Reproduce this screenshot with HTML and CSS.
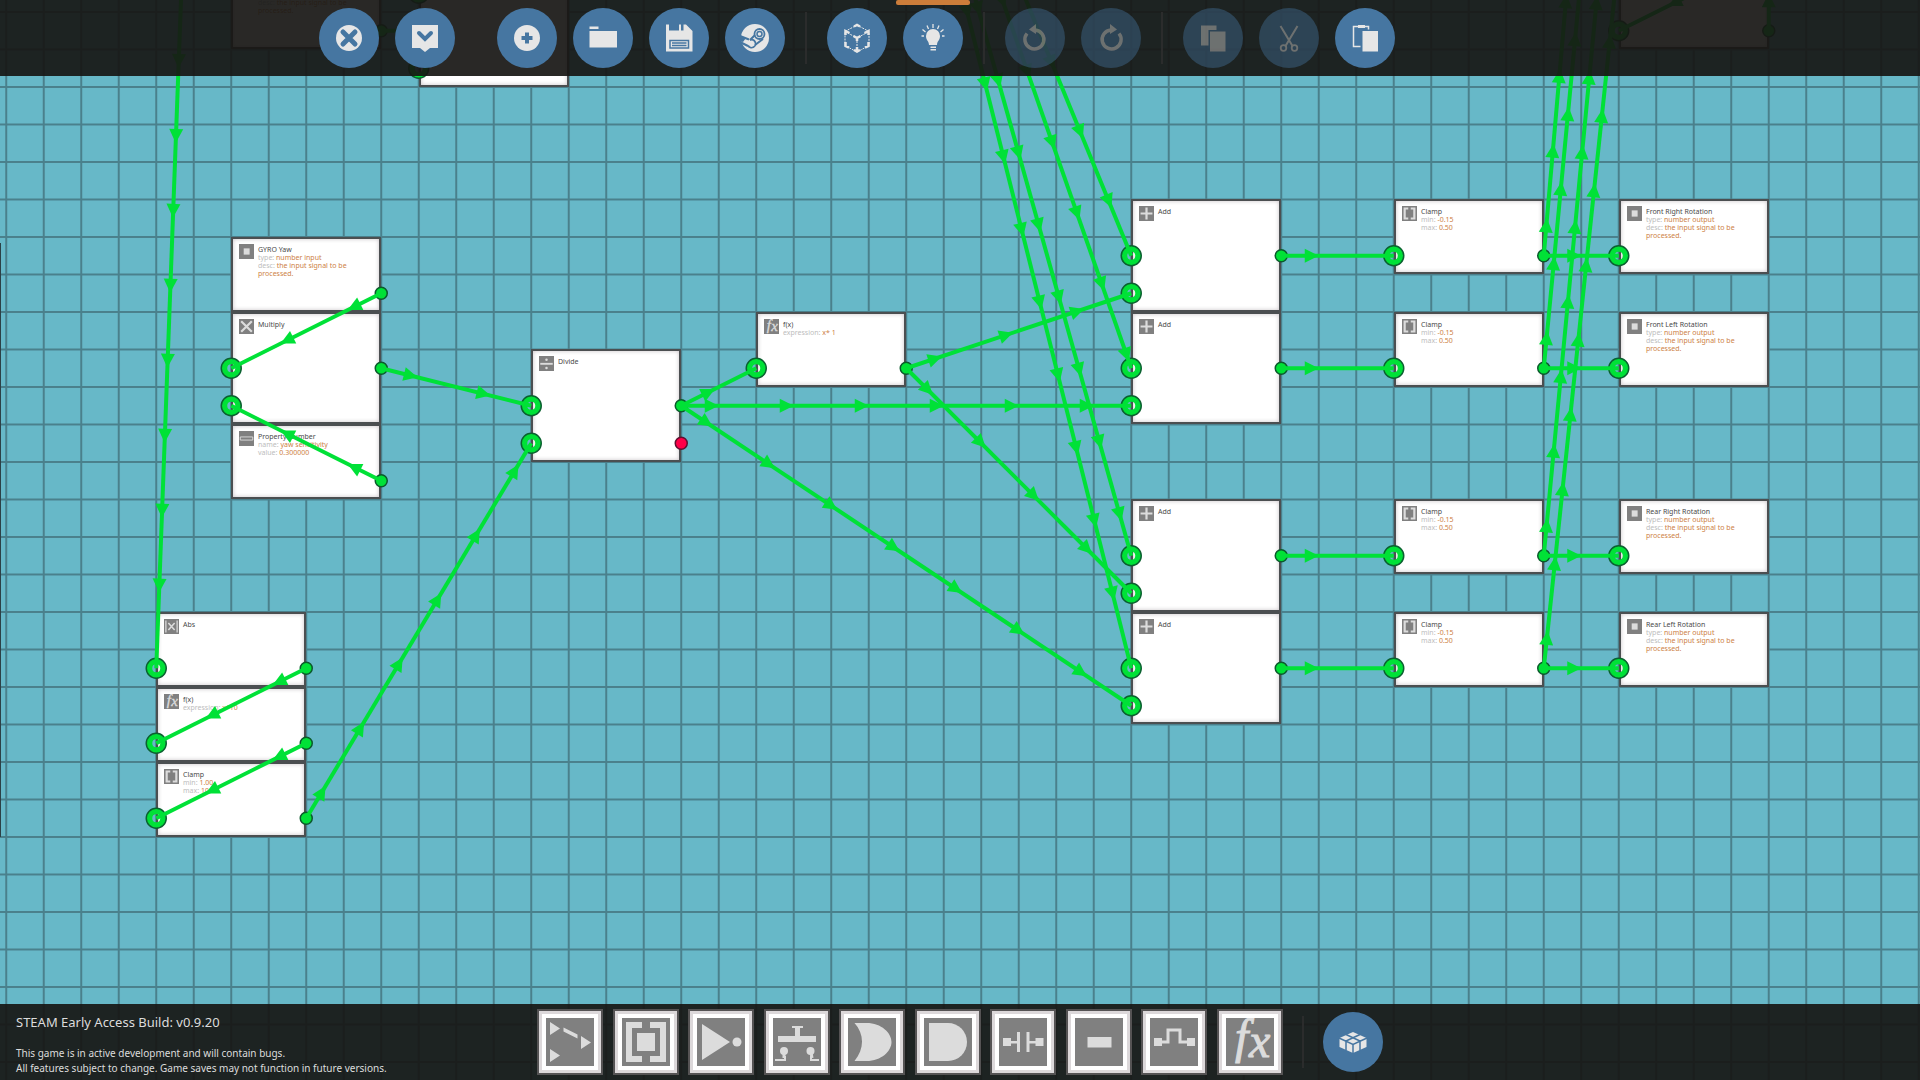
FILE: index.html
```html
<!DOCTYPE html>
<html lang="en">
<head>
<meta charset="utf-8">
<title>Logic Editor</title>
<link rel="stylesheet" href="styles.css">
</head>
<body>
<svg class="defs" aria-hidden="true">
  <symbol id="g-switch" viewBox="0 0 48 48"><path d="M4 4l10 6.500-10 6.500zM4 31l10 6.500-10 6.500zM35 18l10 6.500-10 6.500zM17.500 9.500l14 7v4l-14-7z"/></symbol>
  <symbol id="g-clamp" viewBox="0 0 48 48"><path d="M4 4h16v6h-10v28h10v6h-16zM44 4h-16v6h10v28h-10v6h16zM15 15h18v18h-18z"/></symbol>
  <symbol id="g-bracket" viewBox="0 0 48 48"><path d="M5 5h15v6h-8v26h8v6h-15zM43 5h-15v6h8v26h-8v6h15z"/></symbol>
  <symbol id="g-not" viewBox="0 0 48 48"><path d="M5 6l28 18-28 18z"/><circle cx="40" cy="24" r="4.500"/></symbol>
  <symbol id="g-push" viewBox="0 0 48 48"><path d="M5 18h38v6h-38zM19 8h11v2h-3v8h-5v-8h-3z"/><circle cx="11" cy="33" r="4"/><circle cx="37.500" cy="33" r="4"/><path class="line" stroke-width="3" d="M11 34v6M38 34l1 6"/><path class="line" stroke-width="2" d="M12 38v4h-10M38 38v4h8"/></symbol>
  <symbol id="g-or" viewBox="0 0 48 48"><path d="M6.500 5h12c15 0 25 10 25 19s-10 19-25 19h-12c10-12 10-27 0-38z"/></symbol>
  <symbol id="g-and" viewBox="0 0 48 48"><path d="M5 5h19a19 19 0 0 1 0 38h-19z"/></symbol>
  <symbol id="g-cap" viewBox="0 0 48 48"><path d="M4 20h8v8h-8zM36.500 20h8v8h-8zM18 14h3v20h-3zM27.500 14h3v20h-3zM12 23h6v2.500h-6zM30 23h7v2.500h-7z"/></symbol>
  <symbol id="g-const" viewBox="0 0 48 48"><path d="M12.500 19h24v10.500h-24z"/></symbol>
  <symbol id="g-pulse" viewBox="0 0 48 48"><path d="M4 20h8v8h-8zM37 20h8v8h-8z"/><path class="line" stroke-width="3" d="M12 24h6v-12h12v12h7"/></symbol>
  <symbol id="g-fx" viewBox="0 0 48 48"><text class="fx" y="35"><tspan x="9">f</tspan><tspan x="23" y="39">x</tspan></text></symbol>
  <symbol id="g-io" viewBox="0 0 48 48"><path d="M15 14h19v20h-19z"/></symbol>
  <symbol id="g-mul" viewBox="0 0 48 48"><path class="line" stroke-width="7" d="M7 7l34 34M41 7l-34 34"/></symbol>
  <symbol id="g-add" viewBox="0 0 48 48"><path class="line" stroke-width="7" d="M24 5v38M5 24h38"/></symbol>
  <symbol id="g-div" viewBox="0 0 48 48"><path class="line" stroke-width="6" d="M4 25h40"/><circle cx="24" cy="12" r="4"/><circle cx="24" cy="38" r="4"/></symbol>
  <symbol id="g-prop" viewBox="0 0 48 48"><path class="line" stroke-width="3" d="M4 19h40v10h-40z"/></symbol>
  <symbol id="g-abs" viewBox="0 0 48 48"><path class="line" stroke-width="4" d="M6 5v38M42 5v38"/><path class="line" stroke-width="5" d="M14 13l20 22M34 13l-20 22"/></symbol>
</svg>

<main class="board" id="board" aria-label="Logic board"></main>

<header class="topbar">
  <div class="group">
    <button class="round" aria-label="Close"><svg viewBox="0 0 60 60"><circle cx="30" cy="30" r="13"/><path class="cut" stroke-width="5" stroke-linecap="round" d="M24 24l12 12M36 24l-12 12"/></svg></button>
    <button class="round" aria-label="Confirm"><svg viewBox="0 0 60 60"><path d="M17 17h26v23h-8l-5 4-5-4h-8z"/><path class="cut" stroke-width="4" stroke-linecap="round" d="M24 25l6 6 6-6"/></svg></button>
  </div>
  <div class="group">
    <button class="round" aria-label="New"><svg viewBox="0 0 60 60"><circle cx="30" cy="30" r="13"/><path class="cut" stroke-width="4" d="M30 24.500v11M24.500 30h11"/></svg></button>
    <button class="round" aria-label="Open"><svg viewBox="0 0 60 60"><path d="M16.500 18.500h9v2.500h-9zM16.500 23h27.500v16.500h-27.500z"/></svg></button>
    <button class="round" aria-label="Save"><svg viewBox="0 0 60 60"><path d="M17 16.500h3v6h10v-6h2v6h2.500v-6h2.500l6.500 6.500v20.500h-26.500z"/><path class="cut" stroke-width="1.500" d="M21 32.500h18.500v7.500h-18.500zM23 35h14.500M23 37.500h14.500"/></svg></button>
    <button class="round" aria-label="Steam Workshop"><svg viewBox="0 0 60 60"><circle cx="30" cy="30" r="14"/><path class="cut" stroke-width="2" d="M15 28l9 3.500M30 27l-5 5M38 31l-8 6M15 34l8 4"/><path class="cut-fill" d="M14 27l7 3-3 4-4-1z"/><circle class="cut" stroke-width="1.800" cx="34.500" cy="26" r="5"/><circle class="cut" stroke-width="1.500" cx="34.500" cy="26" r="2.500"/><path class="cut" stroke-width="1.800" d="M23 37.500a4 4 0 1 0 2-5.500"/></svg></button>
  </div>
  <span class="divider"></span>
  <div class="group">
    <button class="round" aria-label="View in 3D"><svg viewBox="0 0 60 60"><path class="line" stroke-width="1" stroke-dasharray="2 1" d="M30 17l12 6.500v14L30 44l-12-6.500v-14zM18 23.500L30 30l12-6.500M30 30v13"/><path class="line" stroke-width="2.500" d="M27 18.500l3-1.500 3 1.500M18.500 27v-4l4 2M41.500 27v-4l-4 2M26.500 28l3.500 2 3.500-2M30 30v3M18.500 34v4l3.500 1.500M41.500 34v4l-3.500 1.500M27 42l3 1.500 3-1.500M30 39v4"/></svg></button>
    <button class="round active" aria-label="Logic view"><svg viewBox="0 0 60 60"><path d="M26 37c0-4-3-4.500-3-9a7 7 0 0 1 14 0c0 4.500-3 5-3 9zM27.500 38.500h5.500v1.500h-5.500zM27.500 41h5.500v1.500h-5.500z"/><path class="line" stroke-width="1.300" d="M30 16v4M24 17.500l1.500 3.500M36 17.500L34.500 21M19.500 21.500l3 2.500M40.500 21.500l-3 2.500M18.500 28h2.500M39 28h2.500"/></svg></button>
  </div>
  <span class="divider"></span>
  <div class="group">
    <button class="round" aria-label="Undo" disabled><svg viewBox="0 0 60 60"><path class="line" stroke-width="3.500" d="M22 25.500a9.500 9.500 0 1 0 8-3.500"/><path d="M31 16v10l-7-4.500z"/></svg></button>
    <button class="round" aria-label="Redo" disabled><svg viewBox="0 0 60 60"><path class="line" stroke-width="3.500" d="M38 25.500a9.500 9.500 0 1 1-8-3.500"/><path d="M29 16v10l7-4.500z"/></svg></button>
  </div>
  <span class="divider"></span>
  <div class="group">
    <button class="round" aria-label="Copy" disabled><svg viewBox="0 0 60 60"><path d="M18 17.500h15.500v4.500h-8v15.500h-7.500zM27 23.500h15.500v20h-15.500z"/></svg></button>
    <button class="round" aria-label="Cut" disabled><svg viewBox="0 0 60 60"><path class="line" stroke-width="2" d="M21.500 18l12 20M38.500 18l-12 20"/><circle class="line" stroke-width="1.800" cx="24.500" cy="40" r="2.800"/><circle class="line" stroke-width="1.800" cx="35.500" cy="40" r="2.800"/></svg></button>
    <button class="round" aria-label="Paste"><svg viewBox="0 0 60 60"><path class="line" stroke-width="1.500" d="M24 18.500h-5.500v20h7M28 18.500h5.500v3"/><path d="M23 17h7v3h-7zM27.500 23h15.500v20.500h-15.500z"/></svg></button>
  </div>
</header>

<footer class="bottombar">
  <div class="build">
    <p class="build-name">STEAM Early Access Build: v0.9.20</p>
    <p class="build-note">This game is in active development and will contain bugs.<br>All features subject to change. Game saves may not function in future versions.</p>
  </div>
  <div class="palette">
    <button class="tile" aria-label="Switch"><svg><use href="#g-switch"/></svg></button>
    <button class="tile" aria-label="Clamp"><svg><use href="#g-clamp"/></svg></button>
    <button class="tile" aria-label="Not"><svg><use href="#g-not"/></svg></button>
    <button class="tile" aria-label="Push to toggle"><svg><use href="#g-push"/></svg></button>
    <button class="tile" aria-label="Or"><svg><use href="#g-or"/></svg></button>
    <button class="tile" aria-label="And"><svg><use href="#g-and"/></svg></button>
    <button class="tile" aria-label="Capacitor"><svg><use href="#g-cap"/></svg></button>
    <button class="tile" aria-label="Constant"><svg><use href="#g-const"/></svg></button>
    <button class="tile" aria-label="Pulse"><svg><use href="#g-pulse"/></svg></button>
    <button class="tile" aria-label="Function"><svg><use href="#g-fx"/></svg></button>
  </div>
  <span class="divider"></span>
  <button class="round" aria-label="Components"><svg viewBox="0 0 60 60"><path d="M30 20l13.500 6v9L30 41l-13.500-6v-9z"/><path class="cut" stroke-width="1.500" d="M16 26l14 6.500L44 26M30 32v10M23 22.500l14 6.500v9.500M37 22.500L23 29v9.500"/></svg></button>
</footer>
<script src="script.js"></script>
</body>
</html>
```

FILE: styles.css
```css
* { box-sizing: border-box; }

body {
  margin: 0;
  min-height: 100vh;
  display: flex;
  flex-direction: column;
  justify-content: space-between;
  position: relative;
  overflow: hidden;
  background: #67b8c8;
  font-family: "Noto Sans", "Open Sans", sans-serif;
}

button {
  margin: 0;
  padding: 0;
  border: 0;
  font: inherit;
}

svg { display: block; fill: currentColor; }
.defs { position: absolute; width: 0; height: 0; }
.line { fill: none; stroke: currentColor; }
.cut { fill: none; stroke: #4676a1; }
.cut-fill { fill: #4676a1; }
.fx {
  font: italic 48px "Liberation Serif", serif;
  stroke: currentColor;
  stroke-width: 1px;
}

/* board */
.board {
  position: absolute;
  inset: 0;
  overflow: hidden;
}
.layer {
  position: absolute;
  inset: 0;
  width: 100%;
  height: 100%;
}
.gridline { fill: none; stroke: #4a808c; stroke-width: 2; }
.frame { fill: none; stroke: #2c4046; stroke-width: 2; }
.wire { stroke: #00e137; stroke-width: 4; }
.arrow { fill: #00e137; }
.socket { fill: none; stroke: #00e137; stroke-width: 6; }
.socket-rim { fill: none; stroke: #0b6130; stroke-width: 1.5; }
.plug { fill: #00e137; stroke: #0b5a2c; stroke-width: 1.5; }
.plug.off { fill: #ff0048; stroke: #5f1030; }

.node {
  position: absolute;
  display: flex;
  align-items: flex-start;
  gap: 4px;
  padding: 5px 6px 0;
  border: 2px solid #4b4f51;
  background: #fff;
  box-shadow: inset 0 0 4px #c8c2c6;
  color: #4a4a4a;
}
.node-icon {
  flex: none;
  width: 15px;
  height: 15px;
  background: #808080;
  color: #dcdcdc;
}
.node-title {
  margin: 0;
  padding-top: 2px;
  font-size: 7px;
  font-weight: 400;
  line-height: 8px;
}
.node-row {
  margin: 0;
  width: 96px;
  font-size: 7px;
  line-height: 8px;
  color: #bdbdbd;
}
.node-row b { font-weight: 400; color: #cd8146; }

/* bars */
.topbar, .bottombar {
  position: relative;
  height: 76px;
  background: rgba(23, 22, 20, .92);
}
.topbar {
  display: flex;
  align-items: center;
  justify-content: center;
  padding-right: 206px;
}
.group { display: flex; gap: 16px; }
.group + .group { margin-left: 42px; }
.divider {
  width: 2px;
  height: 52px;
  margin: 0 20px;
  background: #2b2c2c;
}
.round {
  position: relative;
  width: 60px;
  height: 60px;
  border-radius: 50%;
  background: #4676a1;
  color: #e6e6e6;
}
.round:disabled { opacity: .4; }
.round.active::before {
  content: "";
  position: absolute;
  top: -8px;
  left: -7px;
  right: -7px;
  height: 5px;
  border-radius: 2px;
  background: #cc7d3a;
}

.bottombar {
  display: grid;
  grid-template-columns: 1fr auto auto auto 1fr;
  align-items: center;
}
.bottombar .divider { margin: 0 19px; }
.build {
  justify-self: start;
  width: 0;
  padding: 3px 0 0 16px;
  white-space: nowrap;
  color: #dcdcdc;
}
.build p { margin: 0; }
.build-name { font-size: 13px; line-height: 22px; }
.bottombar .build-note { margin-top: 13px; font-size: 10px; line-height: 15px; }
.palette {
  display: flex;
  justify-content: space-between;
  width: 746px;
}
.tile {
  width: 66px;
  height: 66px;
  padding: 4px;
  border: 2px solid #555354;
  background: #fff;
  box-shadow: inset 0 0 0 3px #dcd8da;
  color: #dcdcdc;
}
.tile svg {
  width: 48px;
  height: 48px;
  margin: auto;
  background: #808080;
}
```

FILE: script.js
```js
// Board geometry: everything is placed in grid cells.
const CELL = 37.5, OX = 6.25, OY = 12;
const px = c => OX + c * CELL;
const py = r => OY + r * CELL;

const io = (kind) => [["type", "number " + kind], ["desc", "the input signal to be processed."]];
const lim = (min, max) => [["min", min], ["max", max]];

// col, row, height, icon, title, rows, input rows, output rows
const nodes = [
  [6, -1, 2, "io", "&nbsp;", io("input"), [], [.5]],
  [11, -2, 4, "", "", [], [-.5, .5, 1.5], []],
  [43, -1, 2, "", "", [], [.5], [.5]],
  [6, 6, 2, "io", "GYRO Yaw", io("input"), [], [7.5]],
  [6, 8, 3, "mul", "Multiply", [], [9.5, 10.5], [9.5]],
  [6, 11, 2, "prop", "Property Number", [["name", "yaw sensitivity"], ["value", "0.300000"]], [], [12.5]],
  [14, 9, 3, "div", "Divide", [], [10.5, 11.5], [10.5]],
  [20, 8, 2, "fx", "f(x)", [["expression", "x* 1"]], [9.5], [9.5]],
  [4, 16, 2, "abs", "Abs", [], [17.5], [17.5]],
  [4, 18, 2, "fx", "f(x)", [["expression", "x*10"]], [19.5], [19.5]],
  [4, 20, 2, "bracket", "Clamp", lim("1.00", "10.00"), [21.5], [21.5]],
];
[[5, "Front Right"], [8, "Front Left"], [13, "Rear Right"], [16, "Rear Left"]].forEach(([r, name]) => {
  nodes.push([30, r, 3, "add", "Add", [], [r + 1.5, r + 2.5], [r + 1.5]]);
  nodes.push([37, r, 2, "bracket", "Clamp", lim("-0.15", "0.50"), [r + 1.5], [r + 1.5]]);
  nodes.push([43, r, 2, "io", name + " Rotation", io("output"), [r + 1.5], []]);
});

// from col, from row, to col, to row
const wires = [
  [5, -9.5, 4, 17.5], [10, .5, 11, .5],
  [47, -1.5, 43, .5], [47, .5, 47, -8.5],
  [10, 7.5, 6, 9.5], [10, 12.5, 6, 10.5], [10, 9.5, 14, 10.5],
  [8, 17.5, 4, 19.5], [8, 19.5, 4, 21.5], [8, 21.5, 14, 11.5],
  [18, 10.5, 20, 9.5], [18, 10.5, 30, 10.5], [18, 10.5, 30, 18.5],
  [24, 9.5, 30, 7.5], [24, 9.5, 30, 15.5],
];
[[6.5, -16.5], [9.5, -11.5], [14.5, -6.5], [17.5, -1.5]].forEach(([r, up]) => {
  wires.push([23, -10.5, 30, r], [34, r, 37, r], [41, r, 43, r], [41, r, 43, up]);
});

const circle = (cls, x, y, r) => `<circle class="${cls}" cx="${x}" cy="${y}" r="${r}"/>`;

function wire([c1, r1, c2, r2]) {
  const x1 = px(c1), y1 = py(r1), x2 = px(c2), y2 = py(r2);
  const len = Math.hypot(x2 - x1, y2 - y1);
  const deg = Math.atan2(y2 - y1, x2 - x1) * 180 / Math.PI;
  let out = `<line class="wire" x1="${x1}" y1="${y1}" x2="${x2}" y2="${y2}"/>`;
  for (let d = CELL; d < len - 1; d += 2 * CELL) {
    const x = x1 + (x2 - x1) * d / len, y = y1 + (y2 - y1) * d / len;
    out += `<path class="arrow" d="M0 0l-14-7v14z" transform="translate(${x} ${y}) rotate(${deg})"/>`;
  }
  return out;
}

function node([c, r, h, icon, title, rows]) {
  const x = Math.round(px(c)), y = Math.floor(py(r));
  const bottom = Math.floor(py(r + h));
  const body = title ? `<svg class="node-icon"><use href="#g-${icon}"/></svg><div><h2 class="node-title">${title}</h2>` +
    rows.map(([k, v]) => `<p class="node-row">${k}: <b>${v}</b></p>`).join("") + "</div>" : "";
  return `<article class="node" style="left:${x}px;top:${y}px;width:150px;height:${bottom - y}px">${body}</article>`;
}

const ports = nodes.map(([c, , , , , , ins, outs]) =>
  ins.map(r => circle("socket", px(c), py(r), 7) + circle("socket-rim", px(c), py(r), 10)).join("") +
  outs.map(r => circle("plug", px(c + 4), py(r), 6)).join("")).join("") +
  circle("plug off", px(18), py(11.5), 6);

document.getElementById("board").innerHTML =
  `<svg class="layer"><defs><pattern id="cells" patternUnits="userSpaceOnUse" x="${OX - 1}" y="${OY - 1}" width="${CELL}" height="${CELL}">` +
  `<path class="gridline" d="M1 0v38M0 1h38"/></pattern></defs><rect width="100%" height="100%" fill="url(#cells)"/></svg>` +
  nodes.map(node).join("") +
  `<svg class="layer"><path class="frame" d="M0 ${py(6) + 6}V${py(22)}"/>${ports}${wires.map(wire).join("")}</svg>`;
```
